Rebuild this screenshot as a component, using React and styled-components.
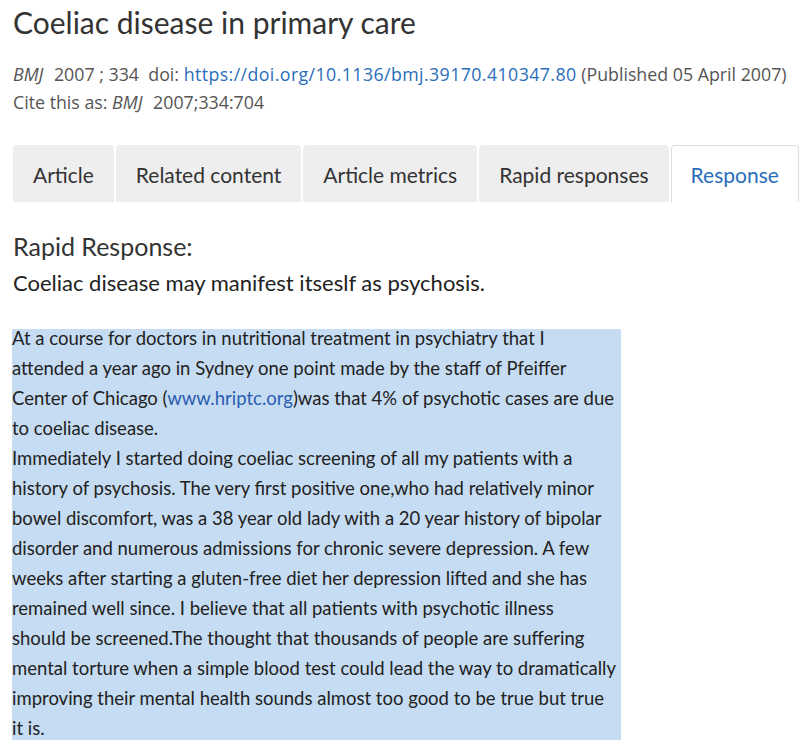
import styled, { createGlobalStyle } from "styled-components";

const GlobalStyle = createGlobalStyle`
  body {
    margin: 0;
    background: #fff;
    font-family: "Lato", sans-serif;
  }
`

const Page = styled.div`
  padding: 4px 0 0 13px;
  width: 787px;
  overflow: hidden;
`

const Title = styled.h1`
  margin: 0;
  font-family: "Lato", sans-serif;
  font-weight: 400;
  font-size: 30px;
  line-height: 36px;
  color: #333;
`

const Meta = styled.div`
  margin-top: 20px;
  font-family: "Open Sans", sans-serif;
  font-size: 17.8px;
  line-height: 28px;
  color: #555;
  white-space: nowrap;
`

const Journal = styled.i`
  margin-right: 6px;
`

const DoiLink = styled.a`
  color: #2a6ebb;
  text-decoration: none;
  letter-spacing: 0.4px;
`

const TabList = styled.div`
  display: flex;
  gap: 2px;
  margin-top: 29px;
`

const Tab = styled.div`
  height: 57px;
  box-sizing: border-box;
  padding: 0 19px;
  display: flex;
  align-items: center;
  font-size: 21px;
  border-radius: 4px 4px 0 0;
  background: ${(p) => (p.$active ? "#fff" : "#eee")};
  color: ${(p) => (p.$active ? "#2a6ebb" : "#333")};
  border: 1px solid ${(p) => (p.$active ? "#ddd" : "#eee")};
  border-bottom: none;
  white-space: nowrap;
`

const ResponseTitle = styled.h2`
  margin: 28px 0 0;
  font-weight: 400;
  font-size: 25px;
  line-height: 32px;
  color: #333;
`

const ResponseSubtitle = styled.h3`
  margin: 6px 0 0;
  font-weight: 400;
  font-size: 22px;
  line-height: 30px;
  color: #222;
`

const Body = styled.p`
  margin: 25px 0 0 -1px;
  width: 609px;
  background: linear-gradient(#c6dcf2, #c6dcf2) no-repeat 0 6px / 100% 411px;
  font-family: "Lato", sans-serif;
  font-size: 18.5px;
  line-height: 30px;
  color: #222;
  white-space: nowrap;
`

const BodyLink = styled.a`
  color: #2a5db0;
  text-decoration: none;
`

const tabs = ["Article", "Related content", "Article metrics", "Rapid responses", "Response"]

const rest = [
  "to coeliac disease.",
  "Immediately I started doing coeliac screening of all my patients with a",
  "history of psychosis. The very first positive one,who had relatively minor",
  "bowel discomfort, was a 38 year old lady with a 20 year history of bipolar",
  "disorder and numerous admissions for chronic severe depression. A few",
  "weeks after starting a gluten-free diet her depression lifted and she has",
  "remained well since. I believe that all patients with psychotic illness",
  "should be screened.The thought that thousands of people are suffering",
  "mental torture when a simple blood test could lead the way to dramatically",
  "improving their mental health sounds almost too good to be true but true",
  "it is.",
]

const App = () => {
  return (
    <Page>
      <GlobalStyle />
      <Title>Coeliac disease in primary care</Title>
      <Meta>
        <div>
          <Journal>BMJ</Journal> 2007 ; 334&nbsp; doi:{" "}
          <DoiLink href="#">https://doi.org/10.1136/bmj.39170.410347.80</DoiLink>{" "}
          (Published 05 April 2007)
        </div>
        <div>
          Cite this as: <Journal>BMJ</Journal> 2007;334:704
        </div>
      </Meta>
      <TabList>
        {tabs.map((t) => (
          <Tab key={t} $active={t === "Response"}>{t}</Tab>
        ))}
      </TabList>
      <ResponseTitle>Rapid Response:</ResponseTitle>
      <ResponseSubtitle>Coeliac disease may manifest itseslf as psychosis.</ResponseSubtitle>
      <Body>
        At a course for doctors in nutritional treatment in psychiatry that I
        <br />
        attended a year ago in Sydney one point made by the staff of Pfeiffer
        <br />
        Center of Chicago (<BodyLink href="#">www.hriptc.org</BodyLink>)was that 4% of psychotic cases are due
        {rest.map((l, i) => (
          <span key={i}>
            <br />
            {l}
          </span>
        ))}
      </Body>
    </Page>
  );
};

export default App;
